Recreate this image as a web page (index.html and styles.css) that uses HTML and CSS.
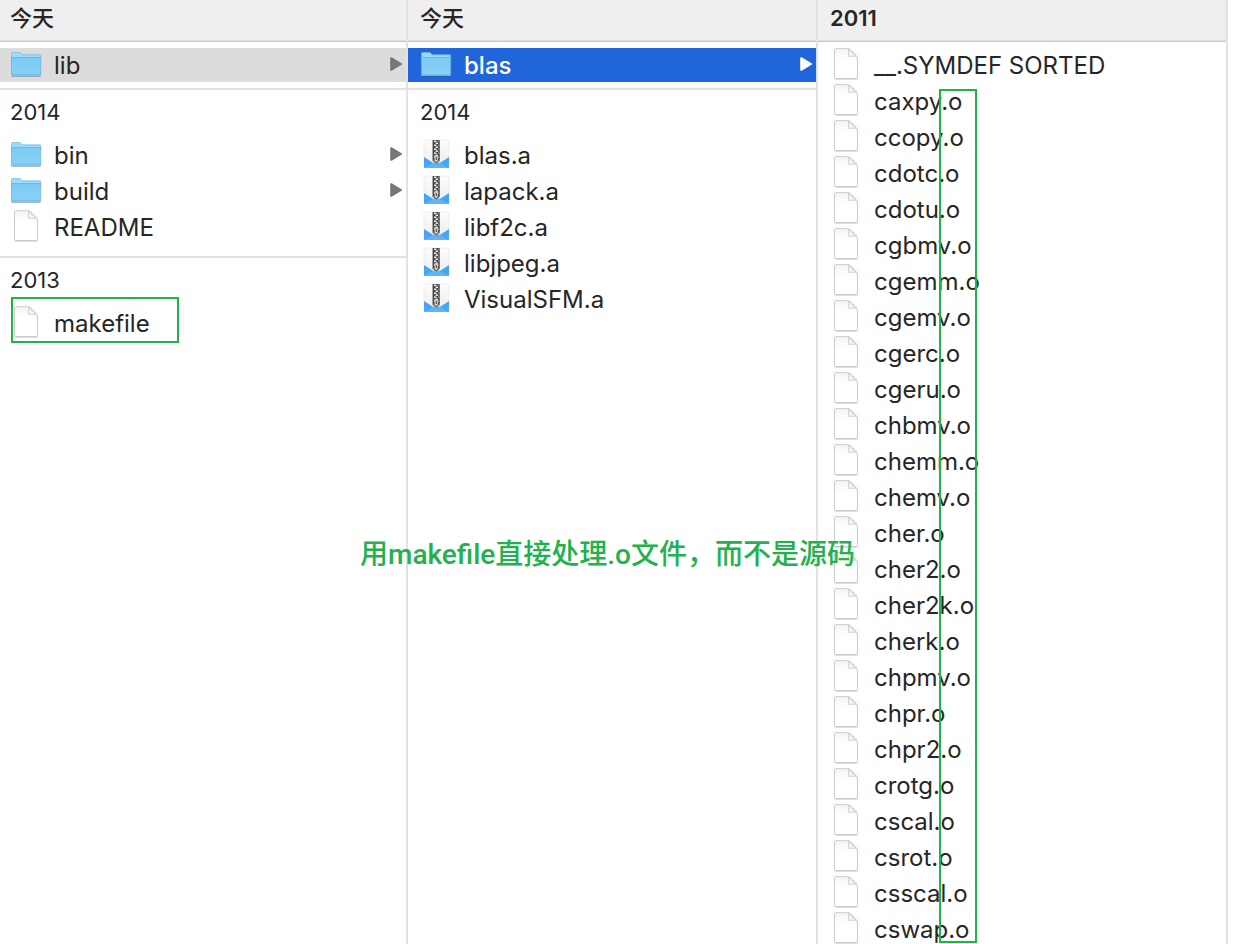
FILE: index.html
```
<!DOCTYPE html>
<html lang="zh-CN">
<head>
<meta charset="utf-8">
<title>lib</title>
<link rel="stylesheet" href="styles.css">
</head>
<body>
<svg class="defs" aria-hidden="true">
  <defs>
    <linearGradient id="folder-fill" x1="0" y1="0" x2="0" y2="1">
      <stop offset="0" stop-color="#7bcaf3"/><stop offset="1" stop-color="#8ad2f8"/>
    </linearGradient>
    <linearGradient id="zip-paper" x1="0" y1="0" x2="0" y2="1">
      <stop offset="0" stop-color="#fcfcfc"/><stop offset="1" stop-color="#ececec"/>
    </linearGradient>
    <linearGradient id="fold-fill" x1="0" y1="1" x2="1" y2="0">
      <stop offset="0" stop-color="#ffffff"/><stop offset="1" stop-color="#e2e2e2"/>
    </linearGradient>
    <linearGradient id="page-fill" x1="0" y1="0" x2="0" y2="1">
      <stop offset="0" stop-color="#f5f5f5"/><stop offset=".4" stop-color="#ffffff"/>
    </linearGradient>
    <pattern id="teeth" width="4" height="4" patternUnits="userSpaceOnUse" x="14" y="2">
      <path d="M0 .5h2.4v1.4H0zM1.6 2.5H4v1.4H1.6z" fill="#efefef"/>
    </pattern>
    <symbol id="folder" viewBox="0 0 32 32">
      <path d="M1.5 28.5h29" stroke="#000" stroke-opacity=".25"/>
      <path d="M1.500 8V5.300Q1.500 4.500 2.300 4.500H9.500Q10.300 4.500 10.800 5.200L12 6.800H30Q30.700 6.800 30.700 7.500V12H1.500Z" fill="#9bdaf8" stroke="#73b9e0" stroke-width=".7"/>
      <path d="M1.400 9.500H30.700V27Q30.700 27.800 30 27.800H2Q1.400 27.800 1.400 27Z" fill="url(#folder-fill)" stroke="#64addb" stroke-width=".7"/>
      <path d="M2 26.300h28" stroke="#69b6e2" stroke-width=".7"/>
    </symbol>
    <symbol id="file" viewBox="0 0 32 32">
      <path d="M5 31h22.500" stroke="#999" stroke-opacity=".6"/>
      <path d="M4.500 1.500Q4.500 .700 5.300 .700H17.800Q19.500 .700 21 2.200L25.800 7.200Q27.500 9 27.500 11V29.600Q27.500 30.500 26.700 30.500H5.300Q4.500 30.500 4.500 29.600Z" fill="url(#page-fill)" stroke="#cacaca"/>
      <path d="M18.600 1.200V8.200H26.300Z" fill="url(#fold-fill)" stroke="#c4c4c4" stroke-width=".8"/>
    </symbol>
    <symbol id="archive" viewBox="0 0 32 32">
      <rect x="4" y="2" width="25" height="27.500" rx="1" fill="url(#zip-paper)" stroke="#e4e4e4" stroke-width=".6"/>
      <path d="M4 19L14 25.500H19L29 19V29Q29 30 28 30H5Q4 30 4 29Z" fill="#46a6f5"/>
      <path d="M4.500 30L14 24.500H19L28.500 30Z" fill="#60b5f9"/>
      <path d="M12 2H20V23L16.500 26L12 23Z" fill="#a9a9a9"/>
      <path d="M13 2H19.500V22L16.300 25.500L13 22Z" fill="#454545"/>
      <path d="M14 2H18.500V20H14Z" fill="url(#teeth)"/>
      <path d="M14.500 17H18V22.500L16.300 24.500L14.500 22.500Z" fill="#ccc"/>
      <path d="M16.300 19v3" stroke="#444"/>
    </symbol>
    <symbol id="arrow" viewBox="0 0 12 14">
      <path d="M1.200 1.200L11 7L1.200 12.800Z" fill="currentColor" stroke="currentColor" stroke-width="2" stroke-linejoin="round"/>
    </symbol>
  </defs>
</svg>
<main class="browser">
  <section class="column column-first">
    <h2 class="heading heading-han">今天</h2>
    <ul class="group group-top">
      <li><button class="row row-path"><svg class="icon"><use href="#folder"/></svg><span class="name">lib</span><svg class="arrow"><use href="#arrow"/></svg></button></li>
    </ul>
    <h3 class="label">2014</h3>
    <ul class="group">
      <li><button class="row"><svg class="icon"><use href="#folder"/></svg><span class="name">bin</span><svg class="arrow"><use href="#arrow"/></svg></button></li>
      <li><button class="row"><svg class="icon"><use href="#folder"/></svg><span class="name">build</span><svg class="arrow"><use href="#arrow"/></svg></button></li>
      <li><button class="row"><svg class="icon"><use href="#file"/></svg><span class="name">README</span></button></li>
    </ul>
    <h3 class="label">2013</h3>
    <ul class="group group-last">
      <li class="marked"><button class="row"><svg class="icon"><use href="#file"/></svg><span class="name">makefile</span></button></li>
    </ul>
  </section>
  <section class="column">
    <h2 class="heading heading-han">今天</h2>
    <ul class="group group-top">
      <li><button class="row row-selected"><svg class="icon"><use href="#folder"/></svg><span class="name">blas</span><svg class="arrow"><use href="#arrow"/></svg></button></li>
    </ul>
    <h3 class="label">2014</h3>
    <ul class="group group-last" id="archives"></ul>
  </section>
  <section class="column">
    <h2 class="heading">2011</h2>
    <ul class="group group-top group-last" id="objects"></ul>
  </section>
</main>
<div class="suffix-mark"></div>
<p class="note">用makefile直接处理.o文件，而不是源码</p>
<script src="script.js"></script>
</body>
</html>
```
FILE: styles.css
```
*, *::after { box-sizing: border-box; }
body {
  margin: 0;
  position: relative;
  height: 100vh;
  overflow: hidden;
  background: #fff;
  color: #262626;
  font-family: Inter, "Noto Sans CJK SC", sans-serif;
  font-size: 24px;
}
.defs { position: absolute; width: 0; height: 0; }
.browser {
  display: grid;
  grid-template-columns: 408fr 410fr 410fr;
  min-height: 100%;
  margin-right: 6px;
}
.column { --inset: 12px; border-right: 2px solid #e2e2e2; min-width: 0; }
.column-first { --inset: 10px; }
.heading, .label { margin: 0; padding-left: var(--inset); font-size: 22px; }
.heading {
  height: 42px;
  line-height: 36px;
  font-weight: 600;
  background: #efefef;
  border-bottom: 1px solid #c8c8c8;
  box-shadow: inset 0 -1px #e0e0e0;
}
.heading-han { font-weight: 500; }
.label { line-height: 44px; padding-bottom: 3px; font-weight: 400; }
.group {
  list-style: none;
  margin: 0;
  padding: 0 0 11px;
  border-bottom: 2px solid #e2e2e2;
}
.group-top { padding: 5px 0; }
.group-last { border-bottom: 0; }
.row {
  display: flex;
  align-items: center;
  gap: 12px;
  width: 100%;
  height: 36px;
  padding: 0 4px 0 var(--inset);
  border: solid transparent;
  border-width: 1px 0;
  background: transparent padding-box;
  color: inherit;
  font: inherit;
  text-align: left;
}
.row-path { background-color: #dcdcdc; }
.row-selected { background-color: #2065d9; color: #fff; font-weight: 500; }
.icon { width: 32px; height: 32px; margin-bottom: 2px; flex: none; }
.name { flex: 1; white-space: nowrap; line-height: 32px; padding-top: 2px; }
.arrow { width: 12px; height: 14px; margin-bottom: 2px; color: #777; flex: none; }
.row-selected .arrow { color: #fff; }
.marked { position: relative; }
.marked::after {
  content: "";
  position: absolute;
  left: 11px;
  top: -8px;
  width: 168px;
  height: 46px;
  border: 2px solid #22b14c;
  pointer-events: none;
}
.suffix-mark {
  position: absolute;
  left: 939px;
  top: 89px;
  width: 38px;
  height: 854px;
  border: 2px solid #22b14c;
  pointer-events: none;
}
.note {
  position: absolute;
  left: 360px;
  top: 535px;
  margin: 0;
  font-family: Roboto, "Noto Sans CJK SC", sans-serif;
  font-size: 28px;
  line-height: 40px;
  font-weight: 500;
  color: #22b14c;
  white-space: nowrap;
}
```
FILE: script.js
```
const archives = ["blas.a", "lapack.a", "libf2c.a", "libjpeg.a", "VisualSFM.a"];
const objects = ["__.SYMDEF SORTED", "caxpy.o", "ccopy.o", "cdotc.o", "cdotu.o", "cgbmv.o",
  "cgemm.o", "cgemv.o", "cgerc.o", "cgeru.o", "chbmv.o", "chemm.o", "chemv.o", "cher.o",
  "cher2.o", "cher2k.o", "cherk.o", "chpmv.o", "chpr.o", "chpr2.o", "crotg.o", "cscal.o",
  "csrot.o", "csscal.o", "cswap.o"];

function fill(id, names, icon) {
  document.getElementById(id).innerHTML = names.map(name =>
    `<li><button class="row"><svg class="icon"><use href="#${icon}"/></svg><span class="name">${name}</span></button></li>`
  ).join("");
}

fill("archives", archives, "archive");
fill("objects", objects, "file");
```
